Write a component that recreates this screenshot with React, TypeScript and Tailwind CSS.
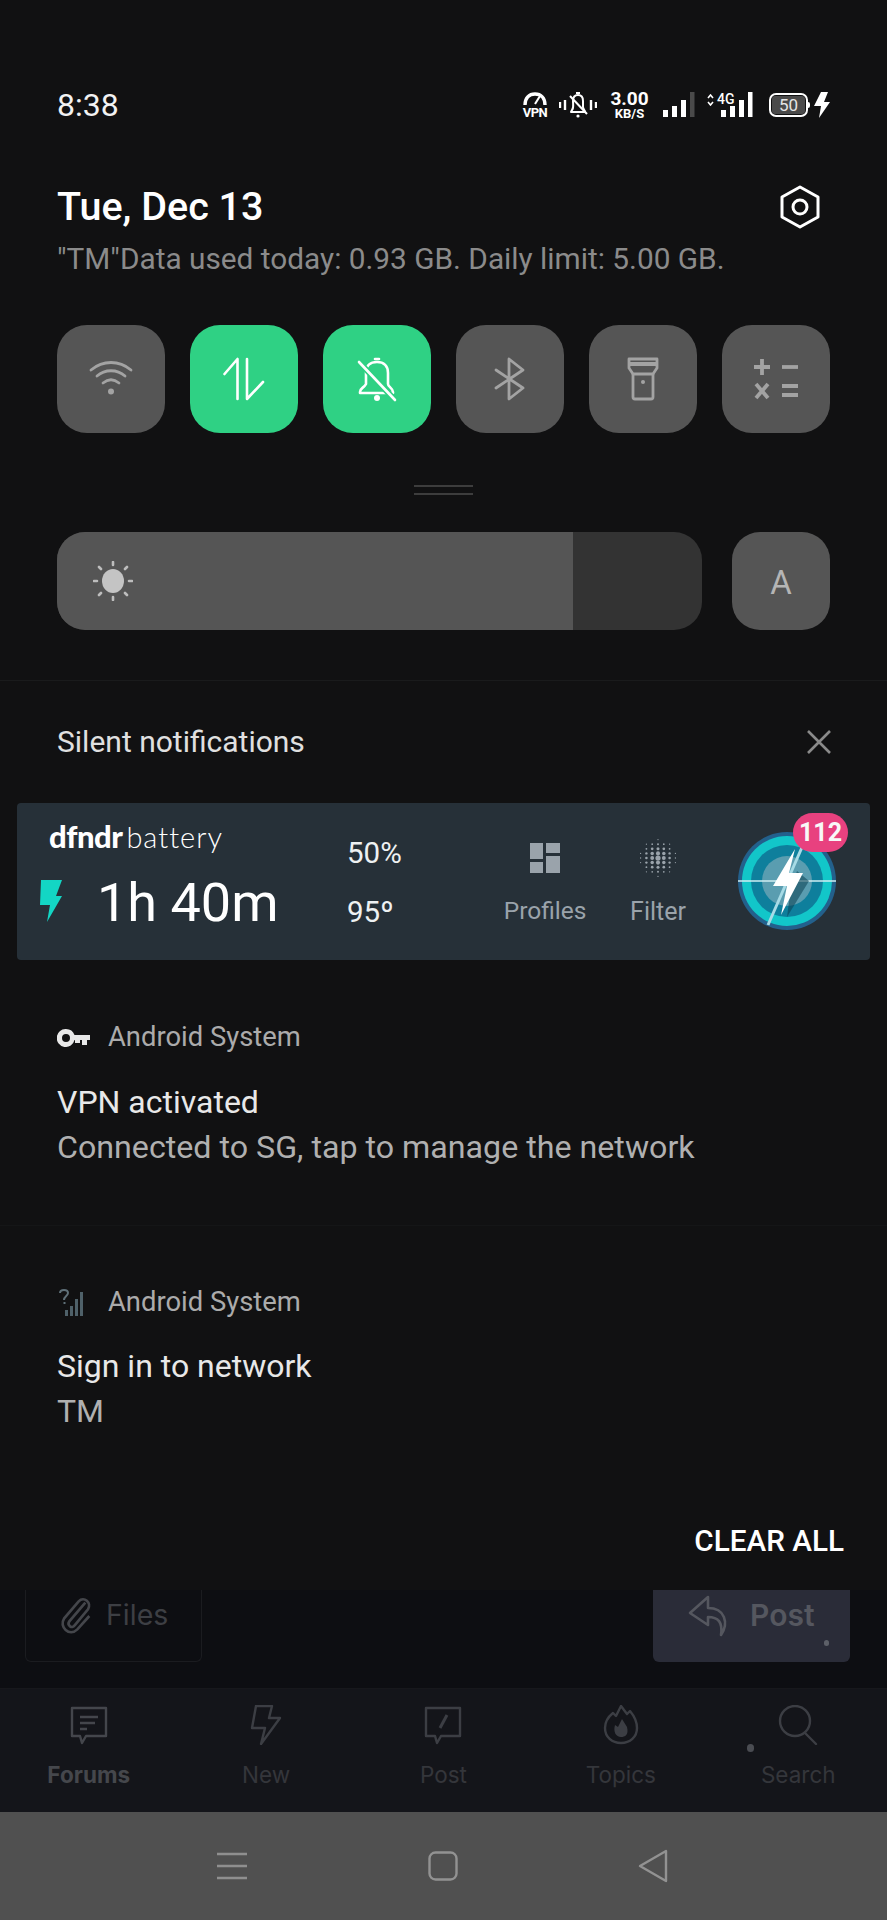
const tiles = [
  { name: "wifi", on: false },
  { name: "data", on: true },
  { name: "bell", on: true },
  { name: "bluetooth", on: false },
  { name: "torch", on: false },
  { name: "calc", on: false },
];

const tabs = ["Forums", "New", "Post", "Topics", "Search"];

function TileIcon({ name }: { name: string }) {
  if (name === "wifi") {
    return (
      <svg className="mb-[2px]" width="44" height="36" viewBox="0 0 44 36" fill="none" stroke="#a3a3a3" strokeWidth="2.8" strokeLinecap="round">
        <path d="M2 10C14 0 30 0 42 10" />
        <path d="M8 16C16 9 28 9 36 16" />
        <path d="M14 23C19 19 25 19 30 23" />
        <circle cx="22" cy="31.5" r="3" fill="#a3a3a3" stroke="none" />
      </svg>
    );
  }
  if (name === "data") {
    return (
      <svg width="42" height="44" viewBox="0 0 42 44" fill="none" stroke="#fff" strokeWidth="2.6" strokeLinecap="round" strokeLinejoin="round">
        <path d="M1.5 17L14.5 2V42" />
        <path d="M24 2V42L40 25" />
      </svg>
    );
  }
  if (name === "bell") {
    return (
      <svg width="44" height="46" viewBox="0 0 44 46" fill="none" stroke="#fff" strokeWidth="2.6" strokeLinecap="round" strokeLinejoin="round">
        <path d="M11 16C11 10 15 6 22 6C29 6 33 10 33 17V28C33 31 38 32 38 36V37H5V36C5 32 9 32 11 28Z" />
        <path d="M20 3H24" />
        <circle cx="22" cy="42" r="3" fill="#fff" stroke="none" />
        <path d="M4 6L40 44" stroke="#2fd184" strokeWidth="6" />
        <path d="M4 6L40 44" />
      </svg>
    );
  }
  if (name === "bluetooth") {
    return (
      <svg width="32" height="44" viewBox="0 0 32 44" fill="none" stroke="#a3a3a3" strokeWidth="2.8" strokeLinecap="round" strokeLinejoin="round">
        <path d="M2 13L29 31L15 42V2L29 13L2 31" />
      </svg>
    );
  }
  if (name === "torch") {
    return (
      <svg width="32" height="44" viewBox="0 0 32 44" fill="none" stroke="#a3a3a3" strokeWidth="2.8" strokeLinejoin="round">
        <path d="M2 2H30V11L26 17H6L2 11Z" />
        <path d="M2 7H30" strokeWidth="4" />
        <path d="M6 17V40C6 41.5 7 42 8 42H24C25 42 26 41.5 26 40V17" />
        <circle cx="16" cy="25" r="2" fill="#a3a3a3" stroke="none" />
      </svg>
    );
  }
  return (
    <svg width="44" height="42" viewBox="0 0 44 42" fill="none" stroke="#a3a3a3" strokeWidth="3.8">
      <path d="M8 1V17M0 9H16" />
      <path d="M28 9H44" />
      <path d="M2 26L14 40M14 26L2 40" />
      <path d="M28 28H44M28 37H44" />
    </svg>
  );
}

function TabIcon({ name }: { name: string }) {
  if (name === "Forums") {
    return (
      <svg width="40" height="40" viewBox="0 0 40 40" fill="none" stroke="#44464c" strokeWidth="2.4" strokeLinejoin="round">
        <path d="M3 3H37V31H17L13 38L11 31H3Z" />
        <path d="M11 12H29M11 18H26M11 24H18" />
      </svg>
    );
  }
  if (name === "New") {
    return (
      <svg width="32" height="40" viewBox="0 0 32 40" fill="none" stroke="#3c3e44" strokeWidth="2.4" strokeLinejoin="round">
        <path d="M6 1H22L19 13H30L11 39L15 23H2Z" />
      </svg>
    );
  }
  if (name === "Post") {
    return (
      <svg width="40" height="40" viewBox="0 0 40 40" fill="none" stroke="#3c3e44" strokeWidth="2.4" strokeLinejoin="round">
        <path d="M3 3H37V31H18L14 38L12 31H3Z" />
        <path d="M17 23L24 10" strokeWidth="3" />
      </svg>
    );
  }
  if (name === "Topics") {
    return (
      <svg width="36" height="40" viewBox="0 0 36 40" fill="none" stroke="#3c3e44" strokeWidth="2.4" strokeLinejoin="round">
        <path d="M10 8L13 11L18 1L24 9L27 6C32 12 34 18 34 23C34 32 27 38 18 38C9 38 2 32 2 23C2 17 5 12 10 8Z" />
        <path d="M12 20L15 22L19 14L24 22C26 30 22 32 18 32C13 32 10 27 12 20Z" fill="#3c3e44" stroke="none" />
      </svg>
    );
  }
  return (
    <svg width="40" height="40" viewBox="0 0 40 40" fill="none" stroke="#3c3e44" strokeWidth="2.4" strokeLinecap="round">
      <circle cx="17" cy="16" r="15" />
      <path d="M27 28L38 39" />
    </svg>
  );
}

function Bars({ dim }: { dim?: boolean }) {
  return (
    <svg width="32" height="26" viewBox="0 0 32 26" fill="#fff">
      <rect x="0" y="18" width="5" height="7" />
      <rect x="9" y="14" width="5" height="11" />
      <rect x="18" y="8" width="5" height="17" />
      <rect x="27" y="0" width="4.5" height="25" fill={dim ? "#4a4a4a" : "#fff"} />
    </svg>
  );
}

function StatusIcons() {
  return (
    <div className="flex items-center text-white">
      {/* vpn gauge */}
      <div className="flex w-[26px] flex-col items-center">
        <svg width="26" height="13" viewBox="0 0 26 13" fill="none" stroke="#fff" strokeWidth="3.4">
          <path d="M3 13C3 6 7 2 13 2C19 2 23 6 23 13" />
          <path d="M13 12L18 4" strokeWidth="2" />
        </svg>
        <span className="mt-[1px] text-[13px] font-bold leading-[13px] tracking-[-0.5px]">VPN</span>
      </div>
      <svg className="ml-[11px]" width="38" height="28" viewBox="0 0 38 28" fill="none" stroke="#fff" strokeWidth="2" strokeLinejoin="round">
        <path d="M1 11V17M6 9V19M32 9V19M37 11V17" strokeWidth="2.4" />
        <path d="M13 19C15 17 14 14 14 10C14 6 16 4 19 4C22 4 24 6 24 10V16C24 18 26 19 26 21H12Z" />
        <path d="M17 2H21" />
        <circle cx="19" cy="25" r="1.6" fill="#fff" stroke="none" />
        <path d="M11 5L28 23" />
      </svg>
      <div className="ml-[13px] flex w-[39px] flex-col items-center">
        <span className="text-[19px] font-bold leading-[17px]">3.00</span>
        <span className="text-[13px] font-bold leading-[13px]">KB/S</span>
      </div>
      <div className="ml-[14px] flex">
        <Bars dim />
      </div>
      <div className="relative ml-[12px] flex h-[26px] w-[46px] justify-end">
        <Bars />
        <span className="absolute left-[10px] top-[1px] bg-[#111112] pr-[1px] text-[14px] font-medium leading-[13px]">4G</span>
        <svg className="absolute left-0 top-[2px]" width="7" height="12" viewBox="0 0 7 12" fill="none" stroke="#fff" strokeWidth="1.6">
          <path d="M1 4L3.5 1L6 4M1 8L3.5 11L6 8" />
        </svg>
      </div>
      <div className="ml-[16px] flex items-center">
        <div className="flex h-[24px] w-[39px] items-center justify-center rounded-[7px] border-2 border-white p-[1px]">
          <span className="flex h-full w-full items-center justify-center rounded-[3px] bg-[#4a4a4a] text-[17px] leading-none text-[#e5e5e5]">50</span>
        </div>
        <div className="h-[6px] w-[2px] rounded-r-[2px] bg-white" />
      </div>
      <svg className="ml-[4px]" width="16" height="26" viewBox="0 0 16 26" fill="#fff">
        <path d="M7 0H14L10 10H16L5 26L7 14H0Z" />
      </svg>
    </div>
  );
}

function DfndrLogo() {
  return (
    <svg width="100" height="100" viewBox="0 0 100 100">
      <circle cx="50" cy="50" r="49" fill="#23608c" />
      <circle cx="50" cy="50" r="45" fill="#12c6c9" />
      <circle cx="50" cy="50" r="36" fill="#0e7f9c" />
      <circle cx="50" cy="50" r="25" fill="#5a9db0" />
      <path d="M1 50H99" stroke="#cfeef2" strokeWidth="1.4" />
      <path d="M31 94L66 14" stroke="#a7dbe6" strokeWidth="3" />
      <path d="M60 40L72 50L50 86L54 56Z" fill="#0b3f52" opacity="0.55" />
      <path d="M58 18L36 55H50L44 84L66 42H52Z" fill="#fff" />
    </svg>
  );
}

export default function App() {
  return (
    <div className="flex h-[1920px] w-[887px] flex-col overflow-hidden bg-[#111112] font-['Roboto',sans-serif]">
      {/* shade panel */}
      <div className="h-[1590px] shrink-0">
        <div className="flex h-[125px] items-end px-[57px]">
          <div className="flex h-[40px] w-full items-center justify-between">
            <span className="text-[32px] leading-none text-[#f2f2f2]">8:38</span>
            <StatusIcons />
          </div>
        </div>

        <div className="mt-[60px] flex h-[44px] items-center justify-between px-[57px]">
          <span className="text-[39.5px] font-medium leading-none text-white">Tue, Dec 13</span>
          <svg className="mr-[10px]" width="40" height="44" viewBox="0 0 40 44" fill="none" stroke="#fff" strokeWidth="3" strokeLinejoin="round">
            <path d="M20 2L38 12V32L20 42L2 32V12Z" />
            <circle cx="20" cy="22" r="7" />
          </svg>
        </div>
        <div className="mt-[12px] h-[36px] whitespace-nowrap px-[57px] text-[29.8px] leading-[36px] text-[#8b8b8b]">
          "TM"Data used today: 0.93 GB. Daily limit: 5.00 GB.
        </div>

        <div className="mt-[48px] flex justify-between px-[57px]">
          {tiles.map((t) => (
            <div
              key={t.name}
              className={
                t.on
                  ? "flex h-[108px] w-[108px] items-center justify-center rounded-[30px] bg-[#2fd184]"
                  : "flex h-[108px] w-[108px] items-center justify-center rounded-[30px] bg-[#555555]"
              }
            >
              <TileIcon name={t.name} />
            </div>
          ))}
        </div>

        <div className="mt-[52px] flex flex-col items-center gap-[6px]">
          <div className="h-[2px] w-[59px] bg-[#3d3d3d]" />
          <div className="h-[2px] w-[59px] bg-[#3d3d3d]" />
        </div>

        <div className="mt-[37px] flex justify-between px-[57px]">
          <div className="flex h-[98px] w-[645px] overflow-hidden rounded-[28px] bg-[#333333]">
            <div className="flex w-[516px] items-center bg-[#555555] pl-[36px]">
              <svg width="40" height="40" viewBox="0 0 40 40" fill="none" stroke="#bdbdbd" strokeWidth="2.6" strokeLinecap="round">
                <ellipse cx="20" cy="20" rx="11" ry="12" fill="#c4c4c4" stroke="none" />
                <path d="M20 1V4M20 36V39M1 20H4M36 20H39M6 6L8 8M32 32L34 34M6 34L8 32M32 8L34 6" />
              </svg>
            </div>
          </div>
          <div className="flex h-[98px] w-[98px] items-center justify-center rounded-[28px] bg-[#555555] pt-[3px] text-[33px] text-[#b5b5b5]">
            A
          </div>
        </div>

        <div className="mt-[50px] h-[1px] bg-[#1a1b1c]" />

        <div className="mt-[41px] flex h-[40px] items-center justify-between pl-[57px] pr-[55px]">
          <span className="text-[30px] leading-none text-[#e0e0e0]">Silent notifications</span>
          <svg width="26" height="26" viewBox="0 0 26 26" fill="none" stroke="#8a8a8a" strokeWidth="2.6">
            <path d="M2 2L24 24M24 2L2 24" />
          </svg>
        </div>

        {/* dfndr battery card */}
        <div className="mx-[17px] mt-[41px] flex h-[157px] w-[853px] rounded-[4px] bg-[#263038]">
          <div className="w-[330px] shrink-0 pl-[23px]">
            <div className="ml-[9px] mt-[17px] flex h-[32px] items-center leading-none text-white">
              <span className="font-['Lato',sans-serif] text-[31px] font-black tracking-[-0.5px]">dfndr</span>
              <span className="ml-[4px] font-['Lato',sans-serif] text-[29px] font-light tracking-[1px]">battery</span>
            </div>
            <div className="mt-[16px] flex items-center">
              <svg className="mb-[5px]" width="22" height="42" viewBox="0 0 22 42" fill="#13d6c4">
                <path d="M1 0H22L16 16H22L7 42L10 25H0Z" />
              </svg>
              <span className="ml-[35px] text-[54px] leading-[70px] text-white">1h 40m</span>
            </div>
          </div>
          <div className="w-[161px] shrink-0 pt-[32px] text-[#eef1f2]">
            <div className="h-[36px] text-[29.5px] leading-[36px]">50%</div>
            <div className="mt-[23px] h-[36px] text-[29.5px] leading-[36px]">95º</div>
          </div>
          <div className="flex w-[74px] shrink-0 flex-col items-center pt-[40px]">
            <svg width="30" height="30" viewBox="0 0 30 30" fill="#9aa3ab">
              <rect x="0" y="0" width="13" height="16" />
              <rect x="0" y="19" width="13" height="11" />
              <rect x="16" y="0" width="14" height="10" />
              <rect x="16" y="13" width="14" height="17" />
            </svg>
            <span className="mt-[26px] whitespace-nowrap text-[24.5px] leading-none text-[#9aa3ab]">Profiles</span>
          </div>
          <div className="ml-[56px] flex w-[40px] shrink-0 flex-col items-center pt-[35px]">
            <svg width="40" height="40" viewBox="0 0 40 40" fill="#9aa3ab">
              {[-4, -3, -2, -1, 0, 1, 2, 3, 4].map((r) =>
                [-3, -2, -1, 0, 1, 2, 3].map((c) => {
                  const d = Math.sqrt(r * r * 0.7 + c * c);
                  if (d > 3.4) return null;
                  return <circle key={`${r}-${c}`} cx={20 + c * 5.8} cy={20 + r * 4.6} r={Math.max(0.6, 2.6 - d * 0.65)} />;
                })
              )}
            </svg>
            <span className="mt-[21px] text-[25px] leading-none text-[#9aa3ab]">Filter</span>
          </div>
          <div className="relative ml-[59px] mt-[28px] h-[100px] w-[100px] shrink-0">
            <DfndrLogo />
            <span className="absolute left-[56px] top-[-18px] flex h-[39px] w-[55px] items-center justify-center rounded-[20px] bg-[#e8417f] text-[25px] font-bold leading-none text-[#f8f8f8]">
              112
            </span>
          </div>
        </div>

        <div className="mt-[62px] px-[57px]">
          <div className="flex h-[32px] items-center">
            <svg width="33" height="18" viewBox="0 0 33 18" fill="#e8e8e8">
              <path fillRule="evenodd" d="M9 0A9 9 0 0 1 17.5 6H33V11H30V16H25V11H23V14H18V11H17.5A9 9 0 1 1 9 0ZM9 5A4 4 0 1 0 9 13A4 4 0 1 0 9 5Z" />
            </svg>
            <span className="ml-[18px] text-[27.4px] leading-none text-[#ababab]">Android System</span>
          </div>
          <div className="mt-[26px] h-[44px] text-[32px] leading-[44px] text-[#e8e8e8]">VPN activated</div>
          <div className="mt-[1px] h-[44px] whitespace-nowrap text-[32.2px] leading-[44px] text-[#b0b0b0]">Connected to SG, tap to manage the network</div>
        </div>

        <div className="mt-[56px] h-[1px] bg-[#151617]" />

        <div className="mt-[61px] px-[57px]">
          <div className="flex h-[32px] items-center">
            <svg width="32" height="30" viewBox="0 0 32 30" fill="#4f6169">
              <path d="M8 28V22H11V28ZM13 28V18H16V28ZM18 28V11H21V28ZM23 28V4H26V28Z" />
              <path d="M3 5C3 1 11 1 11 5C11 8 7 8 7 12M6.5 15H8.5" fill="none" stroke="#5f7078" strokeWidth="2" />
            </svg>
            <span className="ml-[19px] text-[27.4px] leading-none text-[#ababab]">Android System</span>
          </div>
          <div className="mt-[25px] h-[44px] text-[32px] leading-[44px] text-[#e8e8e8]">Sign in to network</div>
          <div className="mt-[1px] h-[44px] text-[32px] leading-[44px] text-[#b0b0b0]">TM</div>
        </div>

        <div className="mt-[88px] flex h-[40px] items-center justify-end pr-[43px] text-[29.7px] font-medium leading-none text-white">
          CLEAR ALL
        </div>
      </div>

      {/* dimmed app behind the shade */}
      <div className="flex h-[98px] shrink-0 items-start justify-between bg-[#0d0e12] pl-[25px] pr-[37px] font-['Inter',sans-serif]">
        <div className="flex h-[72px] w-[177px] items-start rounded-b-[6px] border-x border-b border-[#1b1c20] pl-[34px] pt-[6px]">
          <svg width="32" height="40" viewBox="0 0 24 30" fill="none" stroke="#44464b" strokeWidth="2">
            <path d="M19 5L7 19C5 22 9 25 11 22L21 10C24 5 18 0 14 4L3 17C-1 23 7 31 13 25L22 15" />
          </svg>
          <span className="ml-[14px] text-[28.5px] leading-[38px] text-[#3d3f44]">Files</span>
        </div>
        <div className="relative flex h-[72px] w-[197px] items-start rounded-b-[6px] bg-[#2a2c38] pl-[35px] pt-[5px]">
          <svg width="42" height="42" viewBox="0 0 42 42" fill="none" stroke="#55575f" strokeWidth="2.6" strokeLinejoin="round">
            <path d="M20 2L2 18L20 30V22C30 22 35 27 33 40C41 28 37 13 20 13Z" />
          </svg>
          <span className="ml-[20px] text-[30px] font-semibold leading-[40px] text-[#55575f]">Post</span>
          <span className="absolute left-[171px] top-[50px] h-[6px] w-[5px] rounded-full bg-[#5d6068]" />
        </div>
      </div>

      <div className="relative flex h-[124px] shrink-0 border-t border-[#17181c] bg-[#14151a] font-['Inter',sans-serif]">
        {tabs.map((t) => (
          <div key={t} className="flex w-[177.4px] flex-col items-center pt-[16px]">
            <div className="flex h-[40px] items-center">
              <TabIcon name={t} />
            </div>
            <span
              className={
                t === "Forums"
                  ? "mt-[19px] text-[22.5px] font-bold leading-none text-[#45474c]"
                  : "mt-[19px] text-[22.5px] leading-none text-[#34363b]"
              }
            >
              {t}
            </span>
          </div>
        ))}
        <span className="absolute left-[747px] top-[55px] h-[8px] w-[7px] rounded-full bg-[#4a4c52]" />
      </div>

      {/* nav bar */}
      <div className="flex h-[108px] shrink-0 items-center justify-center gap-[180px] bg-[#505050] pr-[3px]">
        <svg width="32" height="28" viewBox="0 0 32 28" fill="none" stroke="#8f8f8f" strokeWidth="2.4">
          <path d="M1 2H31M1 14H31M1 26H31" />
        </svg>
        <svg width="30" height="30" viewBox="0 0 30 30" fill="none" stroke="#929292" strokeWidth="2.4">
          <rect x="1.5" y="1.5" width="27" height="27" rx="6" />
        </svg>
        <svg width="30" height="34" viewBox="0 0 30 34" fill="none" stroke="#929292" strokeWidth="2.4" strokeLinejoin="round">
          <path d="M28 2V32L2 17Z" />
        </svg>
      </div>
    </div>
  );
}
